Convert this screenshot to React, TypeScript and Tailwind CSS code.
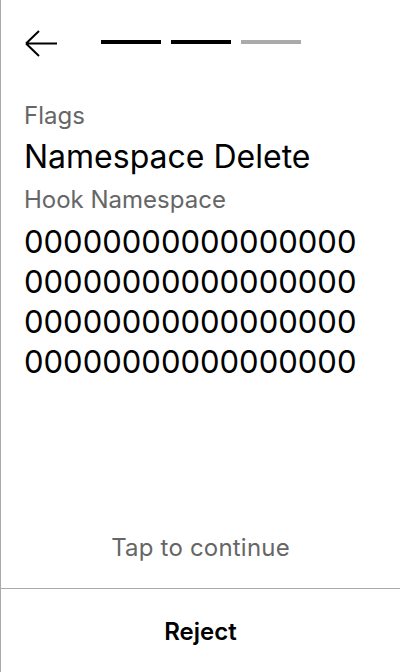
export default function App() {
  const hash = '0000000000000000000000000000000000000000000000000000000000000000'
  const lines = [hash.slice(0, 16) + '0', hash.slice(17, 34), hash.slice(34, 51), hash.slice(51, 64) + '0000']
  return (
    <div
      className="flex h-[672px] w-[400px] flex-col border-l border-[#aaaaaa] bg-white text-black"
      style={{ fontFamily: 'Inter, "Noto Sans", sans-serif' }}
    >
      {/* header */}
      <div className="flex items-start pl-[23px] pt-[30px]">
        <svg width="33" height="28" viewBox="0 0 33 28" fill="none" stroke="black" strokeWidth="2">
          <path d="M2 13.5 L15 1 M2 13.5 L15 26 M2 13.5 H33" />
        </svg>
        <div className="ml-[44px] mt-[10px] flex gap-[10px]">
          <div className="h-[4px] w-[60px] bg-black" />
          <div className="h-[4px] w-[60px] bg-black" />
          <div className="h-[4px] w-[60px] bg-[#aaaaaa]" />
        </div>
      </div>

      {/* details */}
      <div className="mt-[42px] flex flex-1 flex-col">
        <div className="flex flex-col pl-[23px]">
          <div className="text-[24px] leading-[32px] text-[#666666]">Flags</div>
          <div className="mt-[5px] text-[32px] leading-[40px]">Namespace Delete</div>
          <div className="mt-[7px] text-[24px] leading-[32px] text-[#666666]">Hook Namespace</div>
          <div className="mt-[6px] text-[31px] leading-[40px]">
            {lines.map((l, i) => (
              <div key={i}>{l}</div>
            ))}
          </div>
        </div>
        <div className="mt-auto pb-[24px] text-center text-[24px] leading-[32px] tracking-[0.2px] text-[#666666]">
          Tap to continue
        </div>
      </div>

      {/* footer */}
      <div className="flex h-[84px] items-center justify-center border-t border-[#aaaaaa] pt-[2px] text-[24px] font-semibold">
        Reject
      </div>
    </div>
  )
}
